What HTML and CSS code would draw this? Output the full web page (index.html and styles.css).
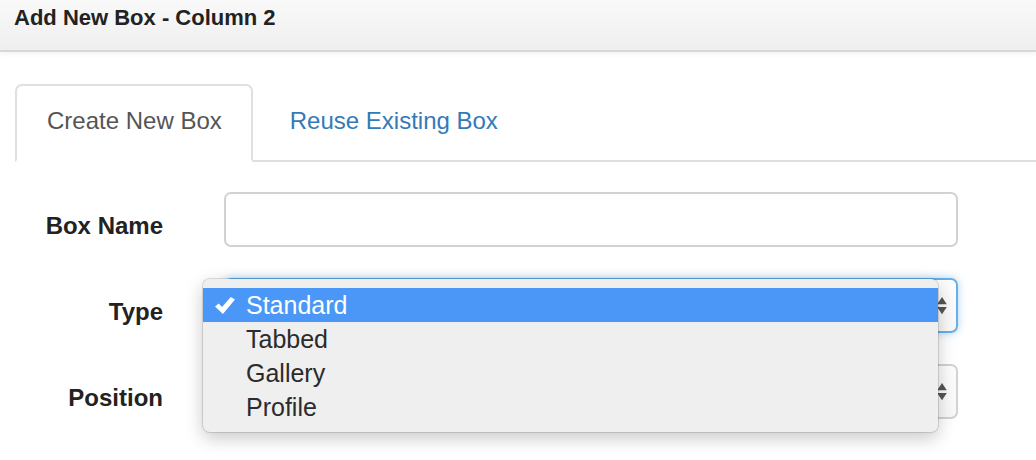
FILE: index.html
```html
<!DOCTYPE html>
<html lang="en">
<head>
<meta charset="utf-8">
<title>Add New Box - Column 2</title>
<link rel="stylesheet" href="styles.css">
</head>
<body>
  <header class="modal-header">
    <h4 class="modal-title">Add New Box - Column 2</h4>
  </header>
  <main class="modal-body">
    <ul class="nav-tabs">
      <li class="tab active"><span>Create New Box</span></li>
      <li class="tab"><a href="#">Reuse Existing Box</a></li>
    </ul>
    <form class="form">
      <label class="label">Box Name</label>
      <div class="control"><div class="input"></div></div>

      <label class="label">Type</label>
      <div class="control">
        <div class="select focus">
          <svg class="arrows" width="10" height="18" viewBox="0 0 10 18"><path d="M5 0 L9.8 7.3 L0.2 7.3 Z M0.2 10 L9.8 10 L5 17.3 Z" fill="#555"/></svg>
        </div>
        <div class="menu">
          <div class="item selected">
            <svg class="check" width="20" height="17" viewBox="0 0 20 17"><path d="M0 9.6 L3.7 6.5 L7 10 L15.8 0 L20 2.5 L7.9 17 Z" fill="#fff"/></svg>
            <span>Standard</span>
          </div>
          <div class="item"><span>Tabbed</span></div>
          <div class="item"><span>Gallery</span></div>
          <div class="item"><span>Profile</span></div>
        </div>
      </div>

      <label class="label">Position</label>
      <div class="control">
        <div class="select">
          <svg class="arrows" width="10" height="18" viewBox="0 0 10 18"><path d="M5 0 L9.8 7.3 L0.2 7.3 Z M0.2 10 L9.8 10 L5 17.3 Z" fill="#555"/></svg>
        </div>
      </div>
    </form>
  </main>
</body>
</html>
```
FILE: styles.css
```css
html, body {
  margin: 0;
  padding: 0;
  background: #fff;
}
body {
  font-family: "Liberation Sans", Arial, Helvetica, sans-serif;
  color: #333;
  width: 1036px;
  height: 460px;
  overflow: hidden;
}
.modal-header {
  height: 50px;
  border-bottom: 2px solid #d8d8d8;
  background: linear-gradient(#f9f9f9, #efefef);
  box-shadow: 0 2px 5px rgba(0, 0, 0, 0.05);
  padding: 0 14px;
  box-sizing: content-box;
}
.modal-title {
  margin: 0;
  padding-top: 3px;
  font-size: 22px;
  line-height: 30px;
  font-weight: bold;
  color: #222;
}
.modal-body {
  padding: 32px 0 0 15px;
}
.nav-tabs {
  list-style: none;
  margin: 0;
  padding: 0;
  display: flex;
  border-bottom: 2px solid #dfdfdf;
}
.tab {
  font-size: 24px;
  line-height: 34px;
  padding: 18px 29px 22px 30px;
  margin-bottom: -2px;
  margin-right: 5px;
  border: 2px solid transparent;
  border-radius: 7px 7px 0 0;
}
.tab.active {
  border-color: #e0e0e0;
  border-bottom-color: #fff;
  background: #fff;
  color: #555;
}
.tab a {
  color: #337ab7;
  text-decoration: none;
}
.form {
  margin-top: 30px;
  display: grid;
  grid-template-columns: 148px 734px;
  column-gap: 61px;
  row-gap: 31px;
}
.label {
  font-size: 24px;
  line-height: 34px;
  font-weight: bold;
  text-align: right;
  padding-top: 17px;
  color: #222;
}
.control {
  position: relative;
  height: 55px;
}
.input, .select {
  height: 55px;
  box-sizing: border-box;
  border: 2px solid #d2d2d2;
  border-radius: 7px;
  background: #fff;
}
.select {
  display: flex;
  align-items: center;
  justify-content: flex-end;
  padding-right: 9px;
  background: linear-gradient(#fdfdfd, #f8f8f8);
}
.select.focus {
  border-color: #66afe9;
  box-shadow: 0 0 9px rgba(102, 175, 233, 0.55);
}
.arrows {
  display: block;
}
.menu {
  position: absolute;
  z-index: 10;
  left: -21px;
  right: 20px;
  top: 1px;
  padding: 9px 0 8px;
  background: #efefef;
  border-radius: 7px;
  box-shadow: 0 0 0 1px rgba(0, 0, 0, 0.12), 0 6px 18px rgba(0, 0, 0, 0.22);
}
.item {
  position: relative;
  height: 34px;
  line-height: 34px;
  font-size: 25px;
  padding-left: 43px;
  color: #2b2b2b;
}
.item.selected {
  background: #4a97f8;
  color: #fff;
}
.check {
  position: absolute;
  left: 12px;
  top: 9px;
}
```
